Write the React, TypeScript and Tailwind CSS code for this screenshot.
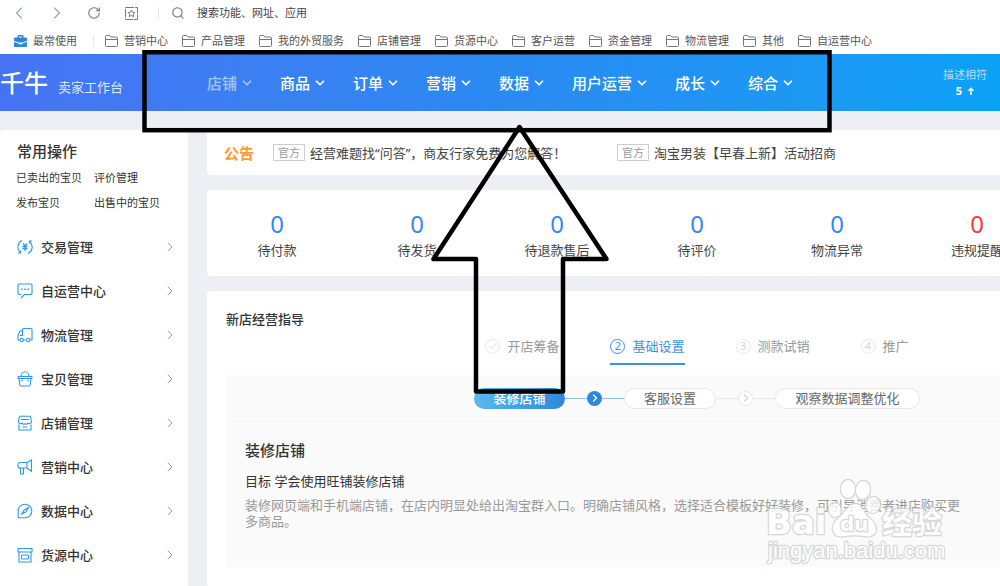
import type { ReactNode } from "react";
import { ChevronDown, ChevronLeft, ChevronRight, RotateCw, Search } from "lucide-react";

const bookmarks = [
  "营销中心",
  "产品管理",
  "我的外贸服务",
  "店铺管理",
  "货源中心",
  "客户运营",
  "资金管理",
  "物流管理",
  "其他",
  "自运营中心",
];

const navItems = ["店铺", "商品", "订单", "营销", "数据", "用户运营", "成长", "综合"];

const quickLinks = ["已卖出的宝贝", "评价管理", "发布宝贝", "出售中的宝贝"];

const notices = ["经营难题找“问答”，商友行家免费为您解答！", "淘宝男装【早春上新】活动招商"];

const stats = [
  { label: "待付款", value: 0 },
  { label: "待发货", value: 0 },
  { label: "待退款售后", value: 0 },
  { label: "待评价", value: 0 },
  { label: "物流异常", value: 0 },
  { label: "违规提醒", value: 0, alert: true },
];

const sideMenu: { label: string; icon: ReactNode }[] = [
  {
    label: "交易管理",
    icon: (
      <>
        <path d="M5 1.600A7 7 0 0 0 3.200 13.200M.8 14h2.700v-2.500M11 14.400A7 7 0 0 0 12.800 2.800M15.200 2h-2.700v2.500" />
        <path d="M6 4.500l2 2.500 2-2.500M5.500 7.500h5M5.500 9.500h5M8 7v5" strokeWidth="1.300" />
      </>
    ),
  },
  {
    label: "自运营中心",
    icon: (
      <>
        <path d="M4.500 11.500H2a1 1 0 0 1-1-1V2a1 1 0 0 1 1-1h12a1 1 0 0 1 1 1v8.500a1 1 0 0 1-1 1H7.500L4 15" />
        <path d="M4.200 6.200h1.500M7.300 6.200h1.500M10.400 6.200h1.500" strokeWidth="1.500" />
      </>
    ),
  },
  {
    label: "物流管理",
    icon: (
      <>
        <path d="M2.500 13H1V8.500L3 4h2.500M5.500 8V2.500a1 1 0 0 1 1-1H14a1 1 0 0 1 1 1V13h-1.500M7 13h2.500M3 8.500h3" />
        <circle cx="4.700" cy="13" r="1.700" />
        <circle cx="11.300" cy="13" r="1.700" />
      </>
    ),
  },
  {
    label: "宝贝管理",
    icon: (
      <>
        <path d="M1.200 5.500h13.600v2H1.200zM2 7.500l.8 6.500a1.200 1.200 0 0 0 1.200 1h8a1.200 1.200 0 0 0 1.200-1l.8-6.500M4 5.500a4 4.700 0 0 1 8 0" />
        <path d="M5 8.500v2M11 8.500v2" />
      </>
    ),
  },
  {
    label: "店铺管理",
    icon: (
      <>
        <path d="M2.500 1.200h11l1 5.300a2 2 0 0 1-3.500 1.500 2 2 0 0 1-3 .8A2 2 0 0 1 5 8a2 2 0 0 1-3.500-1.500zM2 9.500V15h12V9.500" />
        <path d="M4 4.500h8M5.500 12h5" />
      </>
    ),
  },
  {
    label: "营销中心",
    icon: (
      <>
        <path d="M10 3.500H3a2 2 0 0 0-2 2V7a2 2 0 0 0 2 2h7l4.500 3.500V1L10 3.500v5.500" />
        <path d="M3.500 9v6h3V9" />
      </>
    ),
  },
  {
    label: "数据中心",
    icon: (
      <>
        <path d="M1.200 14.800V8a6.800 6.800 0 1 1 6.800 6.800z" />
        <path d="M11.500 4.500L7.200 7 4.800 11 9 8.800z" />
      </>
    ),
  },
  {
    label: "货源中心",
    icon: (
      <>
        <path d="M1 1.500h14v3.500H1zM2 5v10h12V5" />
        <rect x="4.500" y="8" width="7" height="4" rx="1" />
      </>
    ),
  },
];

const phases = ["开店筹备", "基础设置", "测款试销", "推广"];

function FolderIcon() {
  return (
    <svg viewBox="0 0 13 12" className="w-[13px] h-3" fill="none" stroke="#777" strokeWidth="1">
      <path d="M.5 1.500a1 1 0 0 1 1-1h3.200L6 2h5.500a1 1 0 0 1 1 1v7.500a1 1 0 0 1-1 1h-10a1 1 0 0 1-1-1zM.5 4.500h12" />
    </svg>
  );
}

function BrowserBar() {
  return (
    <div className="bg-white h-[54px] text-[#555]">
      <div className="flex items-center h-[26px] pl-[9px]">
        <button aria-label="后退" className="mr-[18px] text-gray-400">
          <ChevronLeft size={20} strokeWidth={1.3} />
        </button>
        <button aria-label="前进" className="mr-5 text-gray-400">
          <ChevronRight size={20} strokeWidth={1.3} />
        </button>
        <button aria-label="刷新" className="mr-6 text-gray-500">
          <RotateCw size={14} strokeWidth={1.8} />
        </button>
        <button aria-label="收藏">
          <svg viewBox="0 0 13 13" className="w-[13px] h-[13px]" fill="none" stroke="#777">
            <path d="M.5 .5h12v12H.5z" strokeDasharray="8.500 1" />
            <path d="M6.500 3l1.100 2.200 2.400.3-1.700 1.700.4 2.400-2.200-1.100-2.200 1.100.4-2.400L3 5.500l2.400-.3z" />
          </svg>
        </button>
        <span className="w-px h-3 bg-gray-200 ml-5 mr-3" />
        <label htmlFor="search" className="mr-3 text-gray-500">
          <Search size={14} strokeWidth={1.8} />
        </label>
        <input
          id="search"
          type="text"
          placeholder="搜索功能、网址、应用"
          className="flex-1 min-w-0 text-[11px] leading-4 outline-none placeholder:text-[#444]"
        />
      </div>
      <nav className="flex items-center h-[30px] pl-[14px] text-[11px] leading-4 whitespace-nowrap">
        <a href="#" className="flex items-center gap-[6px]">
          <svg viewBox="0 0 13 12" className="w-[13px] h-3">
            <path d="M3.500 2.500V1.300A1.300 1.300 0 0 1 4.800 0h3.400a1.300 1.300 0 0 1 1.300 1.300v1.200H12a1 1 0 0 1 1 1V6L8 7.500H5L0 6V3.500a1 1 0 0 1 1-1zM5 1.500v1h3v-1z" fill="#2b87dc" />
            <path d="M0 7l4.500 1.300v1h4v-1L13 7v4a1 1 0 0 1-1 1H1a1 1 0 0 1-1-1z" fill="#2b87dc" />
          </svg>
          最常使用
        </a>
        <span className="w-px h-3 bg-gray-200 ml-4 mr-[11px]" />
        <div className="flex gap-[14px]">
          {bookmarks.map((b) => (
            <a key={b} href="#" className="flex items-center gap-[6px]">
              <FolderIcon />
              {b}
            </a>
          ))}
        </div>
      </nav>
    </div>
  );
}

function Header() {
  return (
    <header className="flex items-center h-[57px] bg-linear-to-r from-[#4673f3] via-[#2a8af2] to-[#0aa1f6] text-white whitespace-nowrap">
      <div className="flex items-center w-[207px]">
        <span className="text-2xl leading-8 font-medium">千牛</span>
        <span className="text-[13px] leading-5 ml-[10px] mt-2 text-blue-100">卖家工作台</span>
      </div>
      <nav className="flex gap-[26px] text-[15px] leading-5 font-medium">
        {navItems.map((item, i) => (
          <button key={item} className={`flex items-center gap-[3px] ${i === 0 ? "opacity-55" : ""}`}>
            {item}
            <ChevronDown size={14} strokeWidth={3} />
          </button>
        ))}
      </nav>
      <div className="ml-auto mr-[13px] text-center text-[11px] leading-4">
        <p className="text-blue-200">描述相符</p>
        <p className="flex items-center justify-center gap-[6px] font-bold">
          5
          <svg viewBox="0 0 6 8" className="w-[6px] h-2" fill="none" stroke="#fff" strokeWidth="1.500">
            <path d="M3 8V1.500M.5 3.800L3 1.300l2.500 2.500" />
          </svg>
        </p>
      </div>
    </header>
  );
}

function Sidebar() {
  return (
    <aside className="w-[188px] shrink-0 bg-white rounded-t-sm pt-[10px] text-[#333]">
      <h2 className="px-[17px] text-[15px] leading-[22px] font-medium">常用操作</h2>
      <div className="grid grid-cols-[78px_1fr] gap-y-[9px] pl-4 mt-2 text-[11px] leading-4">
        {quickLinks.map((link) => (
          <a key={link} href="#">
            {link}
          </a>
        ))}
      </div>
      <nav className="mt-[14px]">
        {sideMenu.map(({ label, icon }) => (
          <a key={label} href="#" className="flex items-center h-11 pl-[17px] pr-[10px]">
            <svg viewBox="0 0 16 16" className="w-4 h-4 mr-2" fill="none" stroke="#2b98ee" strokeWidth="1.100">
              {icon}
            </svg>
            <span className="text-[13px] leading-5 font-medium">{label}</span>
            <ChevronRight size={16} strokeWidth={1.5} className="ml-auto text-gray-400" />
          </a>
        ))}
      </nav>
    </aside>
  );
}

function Arrow({ done }: { done?: boolean }) {
  const line = done ? "bg-[#8fc0ee]" : "bg-gray-200";
  return (
    <div className="flex items-center">
      <span className={`w-[22px] h-px ${line}`} />
      <span
        className={`flex items-center justify-center size-[15px] rounded-full ${
          done ? "bg-[#2f87dd] text-white" : "bg-white border border-gray-200 text-gray-300"
        }`}
      >
        <ChevronRight size={12} strokeWidth={2.5} className="shrink-0" />
      </span>
      <span className={`w-[22px] h-px ${line}`} />
    </div>
  );
}

function Guide() {
  return (
    <section className="bg-white rounded-sm px-[19px] pt-[18px] pb-5 text-[13px] leading-5">
      <h2 className="font-medium text-[#333]">新店经营指导</h2>
      <div className="flex justify-center gap-[51px]">
        {phases.map((name, i) => {
          const active = i === 1;
          return (
            <button
              key={name}
              className={`flex items-center gap-[7px] h-9 border-b-2 ${
                active ? "text-[#3c90e4] border-[#3c90e4]" : "text-[#999] border-transparent"
              }`}
            >
              <span
                className={`flex items-center justify-center size-[15px] rounded-full border text-[11px] leading-3 ${
                  active ? "border-[#3c90e4]" : "border-gray-200 text-gray-300"
                }`}
              >
                {i === 0 ? (
                  <svg viewBox="0 0 10 8" className="w-[9px] h-2" fill="none" stroke="currentColor">
                    <path d="M1 3.500l3 3L9 1" />
                  </svg>
                ) : (
                  i + 1
                )}
              </span>
              {name}
            </button>
          );
        })}
      </div>

      <div className="bg-[#fafafa] rounded-sm mt-[10px]">
        <div className="flex items-center justify-center h-[47px] border-b border-gray-100 text-[#666]">
          <button className="w-[91px] h-[21px] rounded-full bg-linear-to-r from-[#5bb8ec] to-[#2f87dd] text-white font-medium">
            装修店铺
          </button>
          <Arrow done />
          <button className="w-[92px] h-[21px] leading-[19px] rounded-full border border-gray-200 bg-white">
            客服设置
          </button>
          <Arrow />
          <button className="w-[145px] h-[21px] leading-[19px] rounded-full border border-gray-200 bg-white">
            观察数据调整优化
          </button>
        </div>
        <div className="px-[19px] pt-[17px] pb-[38px]">
          <h3 className="text-[15px] leading-[22px] font-medium text-[#333]">装修店铺</h3>
          <p className="mt-[10px] text-[#333]">目标 学会使用旺铺装修店铺</p>
          <p className="mt-[6px] max-w-[727px] leading-4 text-[#999]">
            装修网页端和手机端店铺，在店内明显处给出淘宝群入口。明确店铺风格，选择适合模板好好装修，可引导消费者进店购买更多商品。
          </p>
        </div>
      </div>
    </section>
  );
}

function Watermark() {
  return (
    <svg
      viewBox="0 0 184 90"
      className="absolute left-[764px] top-[476px] w-[184px] h-[90px] pointer-events-none"
      fill="#fff"
      stroke="#cfcfcf"
      strokeWidth="2.500"
      strokeLinejoin="round"
      paintOrder="stroke"
      opacity="0.8"
    >
      <text x="2" y="58" fontFamily="DejaVu Sans" fontWeight="700" fontSize="34">
        Bai
      </text>
      <ellipse cx="71" cy="34" rx="6" ry="7" transform="rotate(-12 71 34)" />
      <ellipse cx="84" cy="13" rx="7" ry="9" />
      <ellipse cx="99" cy="14" rx="7" ry="9" transform="rotate(8 99 14)" />
      <ellipse cx="109" cy="29" rx="7" ry="8" transform="rotate(20 109 29)" />
      <path d="M91 28c-7 0-9 7-14 12-6 5-9 9-8 14 1 6 6 7 11 6 7-1 14-1 21 0 6 1 11-1 11-7 0-5-4-8-9-13-4-5-5-12-12-12z" />
      <text x="76" y="55" fontFamily="DejaVu Sans" fontWeight="700" fontSize="20">
        du
      </text>
      <text x="118" y="57" fontFamily="Noto Sans CJK SC" fontWeight="700" fontSize="30">
        经验
      </text>
      <text x="4" y="82" fontFamily="Liberation Sans" fontSize="22">
        jingyan.baidu.com
      </text>
    </svg>
  );
}

// Hand-drawn callout laid over the page: a frame round the nav and an arrow up to it
function Callout() {
  return (
    <svg
      viewBox="0 0 690 346"
      className="absolute left-[142px] top-[50px] w-[690px] h-[346px] pointer-events-none"
      fill="none"
      stroke="#000"
      strokeWidth="4.500"
    >
      <rect x="2.500" y="2.200" width="685" height="78" />
      <path d="M377.500 77L291.500 209H334V341.500H421V209H464.500Z" strokeLinejoin="round" />
    </svg>
  );
}

export default function App() {
  return (
    <div className="relative h-screen overflow-hidden bg-[#eeeff4] font-['Noto_Sans','Noto_Sans_CJK_SC',sans-serif]">
      <BrowserBar />
      <Header />
      <div className="flex gap-[19px] mt-[19px] min-h-screen">
        <Sidebar />
        <main className="flex-1 min-w-[980px] flex flex-col gap-[15px] text-[#444]">
          <section className="flex items-center h-[45px] bg-white rounded-b-sm pl-[17px] text-[13px] leading-5">
            <h2 className="w-[49px] text-[15px] font-bold text-[#ff9c2c]">公告</h2>
            {notices.map((n) => (
              <a key={n} href="#" className="flex items-center w-[344px]">
                <span className="border border-[#ccccd8] px-1 mr-[5px] text-[11px] leading-[15px] text-[#999]">
                  官方
                </span>
                {n}
              </a>
            ))}
          </section>

          <section className="grid grid-cols-7 h-[86px] bg-white rounded-sm pt-[18px] text-center">
            {stats.map((s) => (
              <a key={s.label} href="#">
                <p className={`text-2xl leading-8 ${s.alert ? "text-[#f5383e]" : "text-[#3388f5]"}`}>{s.value}</p>
                <p className="text-[13px] leading-5">{s.label}</p>
              </a>
            ))}
          </section>

          <Guide />
        </main>
      </div>
      <Callout />
      <Watermark />
    </div>
  );
}
